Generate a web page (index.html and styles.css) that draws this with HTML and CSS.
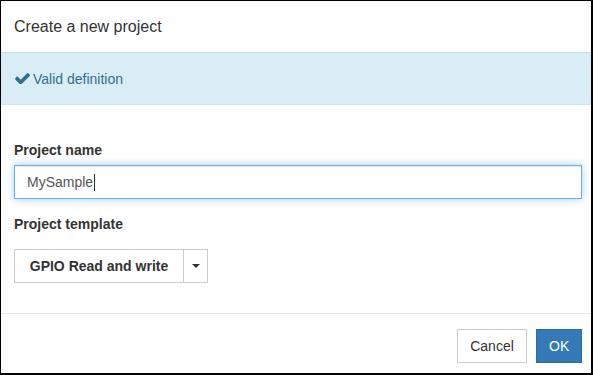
FILE: index.html
```html
<!DOCTYPE html>
<html>
<head>
<meta charset="utf-8">
<link rel="stylesheet" href="styles.css">
</head>
<body>
<div class="modal">
  <div class="modal-header">
    <h4 class="modal-title">Create a new project</h4>
  </div>
  <div class="alert">
    <svg class="check" viewBox="121 370 1550 1056" width="15" height="11" aria-hidden="true"><path d="M1671 566q0 40-28 68l-724 724-136 136q-28 28-68 28t-68-28l-136-136-362-362q-28-28-28-68t28-68l136-136q28-28 68-28t68 28l294 295 656-657q28-28 68-28t68 28l136 136q28 28 28 68z" fill="#31708f"/></svg>
    <span>Valid definition</span>
  </div>
  <div class="modal-body">
    <div class="form-group">
      <label class="label">Project name</label>
      <div class="input"><span class="input-text">MySample</span><span class="cursor"></span></div>
    </div>
    <div class="form-group">
      <label class="label">Project template</label>
      <div class="btn-group">
        <button class="btn btn-main">GPIO Read and write</button>
        <button class="btn btn-caret"><span class="caret"></span></button>
      </div>
    </div>
  </div>
  <div class="modal-footer">
    <button class="btn btn-default">Cancel</button>
    <button class="btn btn-primary">OK</button>
  </div>
</div>
</body>
</html>
```

FILE: styles.css
```css
* { box-sizing: border-box; }
html, body {
  margin: 0;
  padding: 0;
  background: #fff;
}
body {
  font-family: "Liberation Sans", Arial, sans-serif;
  font-size: 14px;
  line-height: 20px;
  color: #333;
}
.modal {
  width: 593px;
  height: 375px;
  border-left: 1px solid #000;
  border-top: 1px solid #000;
  border-right: 2px solid #000;
  border-bottom: 2px solid #000;
  overflow: hidden;
  display: flex;
  flex-direction: column;
}
.modal-header {
  height: 51px;
  padding: 0 9px 0 13px;
  display: flex;
  align-items: center;
  flex-shrink: 0;
}
.modal-title {
  margin: 0;
  font-size: 16px;
  font-weight: normal;
  line-height: 22px;
  color: #333;
}
.alert {
  flex-shrink: 0;
  height: 53px;
  background: #d9edf7;
  border-top: 1px solid #c4dfe9;
  border-bottom: 1px solid #d3e6ee;
  color: #31708f;
  padding: 0 9px 0 14px;
  display: flex;
  align-items: center;
  gap: 3px;
}
.check { display: block; }
.modal-body {
  padding: 35px 9px 15px 13px;
  flex-shrink: 0;
}
.form-group { margin-bottom: 15px; }
.label {
  display: block;
  font-weight: bold;
  margin-bottom: 5px;
}
.input {
  height: 34px;
  border: 1px solid #66afe9;
  box-shadow: inset 0 1px 1px rgba(0,0,0,.075), 0 0 8px rgba(102,175,233,.6);
  padding: 6px 12px;
  display: flex;
  align-items: center;
  color: #555;
}
.cursor {
  display: inline-block;
  width: 1px;
  height: 17px;
  background: #333;
  margin-left: 1px;
}
.btn-group {
  display: flex;
  margin-top: 15px;
}
.btn {
  font-family: "Liberation Sans", Arial, sans-serif;
  font-size: 14px;
  line-height: 20px;
  height: 34px;
  padding: 6px 12px;
  border: 1px solid #ccc;
  background: #fff;
  color: #333;
  margin: 0;
}
.btn-main {
  font-weight: bold;
  width: 170px;
}
.btn-caret {
  width: 25px;
  margin-left: -1px;
  padding: 0 8px;
  display: flex;
  align-items: center;
  justify-content: center;
}
.caret {
  display: block;
  width: 0;
  height: 0;
  border-top: 4px solid #333;
  border-left: 4px solid transparent;
  border-right: 4px solid transparent;
}
.modal-footer {
  border-top: 1px solid #e5e5e5;
  padding: 15px 9px 0 13px;
  display: flex;
  justify-content: flex-end;
  gap: 9px;
}
.btn-default { width: 70px; }
.btn-primary {
  width: 46px;
  background: #337ab7;
  border-color: #2e6da4;
  color: #fff;
}
```
